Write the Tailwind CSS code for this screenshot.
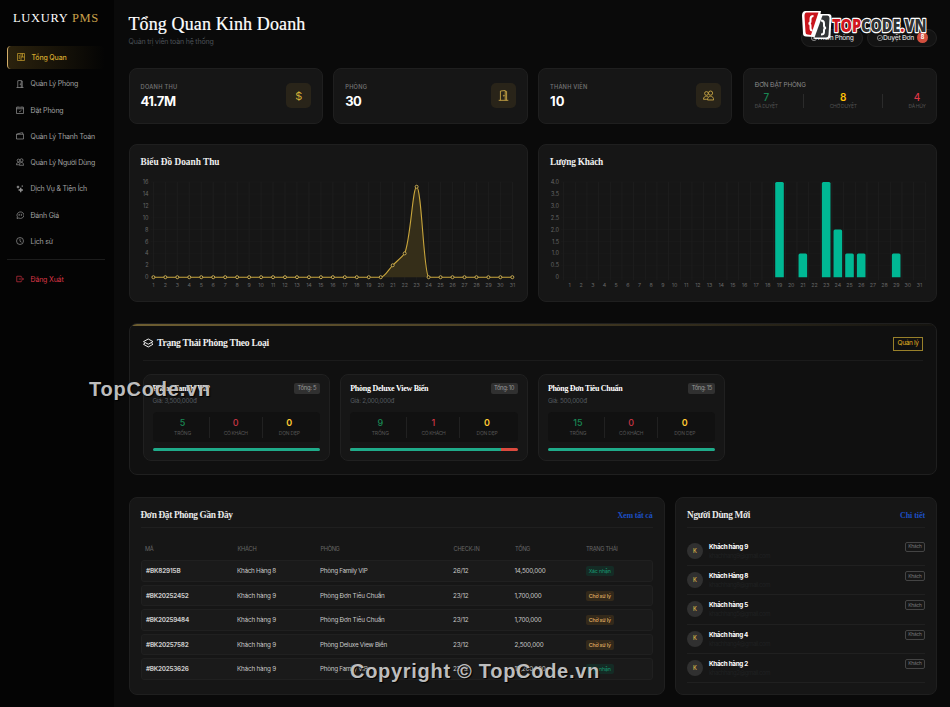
<!DOCTYPE html>
<html lang="vi">
<head>
<meta charset="utf-8">
<title>Luxury PMS</title>
<script src="https://cdn.jsdelivr.net/npm/@tailwindcss/browser@4"></script>
</head>
<body class="w-[950px] h-[707px] overflow-hidden bg-[#0a0a0a] font-[Inter,'Noto_Sans',sans-serif] text-white">
<svg class="hidden">
  <defs>
    <g id="i-grid"><path d="M1 1h14v14H1zM8 1v14M8 8h7M11 1v7M4.500 4v8"/></g>
    <g id="i-door"><path d="M3.500 15V1.500l7-.8V15M10.500 2h2v13M1 15h14"/><circle cx="8.500" cy="8.300" r=".7"/></g>
    <g id="i-cal"><path d="M1 2.500h14V15H1zM1 5.500h14M4 1v1.500M12 1v1.500M6 10l1.500 1.500L11 8.500"/></g>
    <g id="i-wallet"><path d="M1 4.500V14h14V4.500zM1 4.500 11 1.500l2.500 0v3"/></g>
    <g id="i-people"><circle cx="5" cy="5" r="2.700"/><circle cx="11" cy="4.500" r="3"/><path d="M.7 13.500c0-3 2-4.500 4.300-4.500 1 0 2 .3 2.700 1M6.500 14.500h9c0-3.500-2-5.500-4.500-5.500s-4.500 2-4.500 5.500zM.7 13.500h5"/></g>
    <g id="i-stars"><path d="M9.500 5.500l1.200 3.300 3.300 1.200-3.300 1.200-1.200 3.300-1.200-3.300L5 10l3.300-1.200zM4 1.500l.6 1.900 1.900.6-1.900.6L4 6.500l-.6-1.900L1.500 4l1.900-.6zM12.500 1v2.500M11.300 2.200h2.500" fill="currentColor"/></g>
    <g id="i-chat"><path d="M2 15l.8-3.500A7 6.500 0 1 1 5.500 14zM5 6.500h1.800v1.600L5.500 10M9.500 6.500h1.800v1.600L10 10"/></g>
    <g id="i-clock"><circle cx="8" cy="8" r="7"/><path d="M8 3.500V8.500l3 2"/></g>
    <g id="i-exit"><path d="M10.500 5V2.500h-9v11h9V11M5.500 8H15M12 5l3 3-3 3"/></g>
    <g id="i-layers"><path d="M8 1.500l7.300 4L8 9.500l-7.300-4zM3 8L.7 9.500 8 13.700l7.300-4.200L13 8"/></g>
    <g id="i-plus"><circle cx="8" cy="8" r="7"/><path d="M8 4.500v7M4.500 8h7"/></g>
    <g id="i-check"><circle cx="8" cy="8" r="7"/><path d="M4.500 8l2.500 2.500L11.500 6"/></g>
  </defs>
</svg>

<div class="flex w-[950px] h-[707px]">
  <aside class="w-[114px] h-full shrink-0 bg-[#040404] pl-[7px] pr-[9px]">
    <div class="h-[46px] pt-[10px] pl-[6px] font-['Liberation_Serif',serif] text-[12.5px] leading-[16px] whitespace-nowrap"><span data-w="86">LUXURY <span class="text-[#c9a04a]">PMS</span></span></div>
    <nav id="nav" class="flex flex-col gap-[3.8px] text-[7px] leading-[10px] text-[#a0a0a0]"></nav>
    <div class="mt-[6px] h-px bg-[#1c1c1c]"></div>
    <a class="mt-[8px] flex h-[22.500px] items-center pl-[9px] text-[7px] leading-[10px] text-[#dc3545]">
      <svg class="w-[8px] h-[8px] mr-[6.500px]" viewBox="0 0 16 16" fill="none" stroke="currentColor" stroke-width="1.300"><use href="#i-exit"/></svg><span class="pt-[1.500px]" data-w="33">Đăng Xuất</span></a>
  </aside>

  <main class="flex-1 pl-[14.500px] pr-[13px]">
    <header class="flex h-[68px] justify-between">
      <div class="pt-[12px]">
        <h1 class="font-['Liberation_Serif',serif] text-[18px] leading-[24px] whitespace-nowrap [-webkit-text-stroke:0.2px_white]"><span data-w="177">Tổng Quan Kinh Doanh</span></h1>
        <p class="text-[7px] leading-[11px] text-[#4b5157]"><span data-w="85">Quản trị viên toàn hệ thống</span></p>
      </div>
      <div class="flex gap-[4.500px] pt-[28.500px] text-[6.700px] font-medium text-[#d6d6d6]">
        <div class="flex w-[62px] h-[18px] items-center rounded-full border border-[#222] bg-[#131313] pl-[9px]"><svg class="w-[6px] h-[6px]" viewBox="0 0 16 16" fill="none" stroke="currentColor" stroke-width="1.500"><use href="#i-plus"/></svg><span class="pt-[2px]" data-w="37">Thêm Phòng</span></div>
        <div class="flex w-[70px] h-[18px] items-center rounded-full border border-[#222] bg-[#131313] pl-[9px]"><svg class="w-[6px] h-[6px]" viewBox="0 0 16 16" fill="none" stroke="currentColor" stroke-width="1.500"><use href="#i-check"/></svg><span class="pt-[1px]" data-w="31">Duyệt Đơn</span><b class="ml-[3px] flex w-[11px] h-[11px] items-center justify-center rounded-full bg-[#d3503f] text-[5.500px] text-white">8</b></div>
      </div>
    </header>

    <section class="grid grid-cols-4 gap-[10.500px] h-[55.500px]">
      <div class="flex items-center justify-between rounded-[8px] border border-[#1f1f1f] bg-[#161616] pl-[11px] pr-[10.500px]">
        <div><p class="mt-[1px] text-[5.700px] leading-[8px] font-medium text-[#777]"><span data-w="37">DOANH THU</span></p><p class="mt-[1px] text-[13px] leading-[18px] font-bold"><span data-w="35">41.7M</span></p></div>
        <div class="flex w-[25px] h-[25px] items-center justify-center rounded-[5px] bg-[#292419] text-[11px] text-[#d4af37]">$</div>
      </div>
      <div class="flex items-center justify-between rounded-[8px] border border-[#1f1f1f] bg-[#161616] pl-[11px] pr-[10.500px]">
        <div><p class="mt-[1px] text-[5.700px] leading-[8px] font-medium text-[#777]"><span data-w="22">PHÒNG</span></p><p class="mt-[1px] text-[13px] leading-[18px] font-bold"><span data-w="16">30</span></p></div>
        <div class="flex w-[25px] h-[25px] items-center justify-center rounded-[5px] bg-[#292419] text-[#c9a646]"><svg class="w-[11px] h-[11px]" viewBox="0 0 16 16" fill="none" stroke="currentColor" stroke-width="1.300"><use href="#i-door"/></svg></div>
      </div>
      <div class="flex items-center justify-between rounded-[8px] border border-[#1f1f1f] bg-[#161616] pl-[11px] pr-[10.500px]">
        <div><p class="mt-[1px] text-[5.700px] leading-[8px] font-medium text-[#777]"><span data-w="37.500">THÀNH VIÊN</span></p><p class="mt-[1px] text-[13px] leading-[18px] font-bold"><span data-w="14.500">10</span></p></div>
        <div class="flex w-[25px] h-[25px] items-center justify-center rounded-[5px] bg-[#292419] text-[#c9a646]"><svg class="w-[11px] h-[11px]" viewBox="0 0 16 16" fill="none" stroke="currentColor" stroke-width="1.300"><use href="#i-people"/></svg></div>
      </div>
      <div class="rounded-[8px] border border-[#1f1f1f] bg-[#161616] pl-[11px] pr-[10.500px] pt-[11.500px]">
        <p class="text-[6.300px] leading-[9px] text-[#8a8a8a]"><span data-w="51">ĐƠN ĐẶT PHÒNG</span></p>
        <div class="mt-[2px] flex items-center justify-between text-center text-[5px] leading-[7px] text-[#505050]">
          <div><p class="text-[10px] leading-[11px] font-medium text-[#198754]">7</p><p><span class="pt-[0.500px]" data-w="23">ĐÃ DUYỆT</span></p></div>
          <i class="w-px h-[14px] bg-[#2b2b2b]"></i>
          <div><p class="text-[10px] leading-[11px] font-semibold text-[#ffc107]">8</p><p><span class="pt-[0.500px]" data-w="27">CHỜ DUYỆT</span></p></div>
          <i class="w-px h-[14px] bg-[#2b2b2b]"></i>
          <div><p class="text-[10px] leading-[11px] font-medium text-[#dc3545]">4</p><p><span class="pt-[0.500px]" data-w="17">ĐÃ HỦY</span></p></div>
        </div>
      </div>
    </section>

    <section class="mt-[20.500px] grid grid-cols-2 gap-[10.500px] h-[158px]">
      <div class="rounded-[8px] border border-[#1f1f1f] bg-[#161616] pt-[10px]">
        <h2 class="pl-[11px] h-[20px] font-['Liberation_Serif',serif] text-[9.300px] leading-[14px] font-bold text-[#eee]"><span data-w="79">Biểu Đồ Doanh Thu</span></h2>
        <svg id="line" class="block w-[397px] h-[120px]" viewBox="129.500 175 397 120"></svg>
      </div>
      <div class="rounded-[8px] border border-[#1f1f1f] bg-[#161616] pt-[10px]">
        <h2 class="pl-[11px] h-[20px] font-['Liberation_Serif',serif] text-[9.300px] leading-[14px] font-bold text-[#eee]"><span data-w="53">Lượng Khách</span></h2>
        <svg id="bars" class="block w-[397px] h-[120px]" viewBox="539 175 397 120"></svg>
      </div>
    </section>

    <section class="mt-[21px] h-[152px] overflow-hidden rounded-[8px] border border-[#1f1f1f] bg-[#101010]">
      <div class="h-[2px] bg-linear-to-r from-[#6e5e31] via-[#463c23] to-[#151410]"></div>
      <div class="px-[13px]">
        <div class="flex h-[35px] items-center justify-between border-b border-[#1b1b1b]">
          <h2 class="flex items-center gap-[4px] font-['Liberation_Serif',serif] text-[9.600px] font-bold text-[#eee]"><svg class="mt-[1px] w-[10.500px] h-[10.500px]" viewBox="0 0 16 16" fill="none" stroke="currentColor" stroke-width="1.500"><use href="#i-layers"/></svg><span data-w="112">Trạng Thái Phòng Theo Loại</span></h2>
          <a class="mt-[2px] flex w-[28px] h-[12px] box-content items-center justify-center border border-[#98802a] text-[6.500px] text-[#e0b020]"><span data-w="21">Quản lý</span></a>
        </div>
        <div id="rooms" class="mt-[12.500px] grid grid-cols-4 gap-[10.300px]"></div>
      </div>
    </section>

    <section class="mt-[22px] flex gap-[10.500px] h-[198px]">
      <div class="w-[536px] shrink-0 rounded-[8px] border border-[#1f1f1f] bg-[#161616] px-[11px]">
        <div class="flex h-[30px] items-center justify-between border-b border-[#1f1f1f] pt-[6px] font-['Liberation_Serif',serif] text-[9.300px] font-bold text-[#e8e8e8]"><h2><span data-w="92">Đơn Đặt Phòng Gần Đây</span></h2><a class="text-[8px] text-[#1c4fc4]"><span data-w="35">Xem tất cả</span></a></div>
        <div class="grid h-[33px] grid-cols-[92.500px_83px_133px_61.500px_71px_1fr] items-center pl-[4.500px] pt-[9px] text-[5.700px] text-[#666]">
          <span><span data-w="8.500">MÃ</span></span><span><span data-w="19">KHÁCH</span></span><span><span data-w="19">PHÒNG</span></span><span><span data-w="26">CHECK-IN</span></span><span><span data-w="15">TỔNG</span></span><span><span data-w="31.500">TRẠNG THÁI</span></span>
        </div>
        <div id="orders" class="-mt-[1px] flex flex-col gap-[3px]"></div>
      </div>
      <div class="flex-1 rounded-[8px] border border-[#1f1f1f] bg-[#161616] px-[11px]">
        <div class="flex h-[30px] items-center justify-between border-b border-[#1f1f1f] pt-[6px] font-['Liberation_Serif',serif] text-[9.300px] font-bold text-[#e8e8e8]"><h2><span data-w="63">Người Dùng Mới</span></h2><a class="text-[8px] text-[#1c4fc4]"><span data-w="25">Chi tiết</span></a></div>
        <div id="users" class="pt-[9px]"></div>
      </div>
    </section>
  </main>
</div>

<svg class="absolute left-[798px] top-[6px] w-[136px] h-[38px]" viewBox="798 6 136 38">
  <path d="M806 11h15l-.5 3H828.500q3 0 3 3l-1 19q0 3-3 3h-13l-.5-2-8-.5q-3 0-3-3l-1-18q0-4 3-4.500z" fill="#fff"/>
  <path d="M806.500 12.500h12l-7.500 22.500-3.500-.5q-2 0-2-2.500l-1-16q0-3.500 2-3.500z" fill="#c9141c"/>
  <path d="M822.500 15.500h5q2 0 2 2.500l-1 17q-.3 2.500-2.500 2.500h-11.500z" fill="#333638"/>
  <path d="M813.500 16q-3 0-3 3v2.300q0 2-2 2.200 2 .2 2 2.200V28q0 2.500 2 2.500M821 20.500q3 0 3 3v2.300q0 2 2 2.200-2 .2-2 2.200V32q0 2.500-3 2.500" fill="none" stroke="#fff" stroke-width="2"/>
  <text x="832" y="31.500" font-family="Open Sans, sans-serif" font-weight="800" font-size="18" textLength="94.500" lengthAdjust="spacingAndGlyphs" paint-order="stroke" stroke="#fff" stroke-width="2.400" stroke-linejoin="round"><tspan fill="#d0161e">TOP</tspan><tspan fill="#303234">CODE</tspan><tspan fill="#d0161e">.</tspan><tspan fill="#303234">VN</tspan></text>
</svg>
<div class="absolute left-[89px] top-[377px] whitespace-nowrap font-['Liberation_Sans',sans-serif] text-[20px] leading-[24px] font-bold text-[#bdbdbd] [text-shadow:1px_1px_1px_#000]"><span data-w="122">TopCode.vn</span></div>
<div class="absolute left-[350px] top-[659px] whitespace-nowrap font-['Liberation_Sans',sans-serif] text-[20px] leading-[24px] font-bold text-[#bdbdbd] [text-shadow:1px_1px_1px_#000]"><span data-w="250">Copyright © TopCode.vn</span></div>

<script>
const $ = id => document.getElementById(id);

$('nav').innerHTML = [['grid','Tổng Quan',35],['door','Quản Lý Phòng',47.5],['cal','Đặt Phòng',33],['wallet','Quản Lý Thanh Toán',64.5],['people','Quản Lý Người Dùng',64.5],['stars','Dịch Vụ & Tiện Ích',56.5],['chat','Đánh Giá',28.5],['clock','Lịch sử',22.5]]
  .map(([icon, label, w], i) => `<a class="${i ? 'flex h-[22.5px] items-center pl-[9px]' : 'flex h-[22.5px] items-center rounded-[4px] border-l border-[#d4af6a] bg-linear-to-r from-[#2b220d] to-transparent pl-[9px] font-medium text-[#d4a92f]'}"><svg class="w-[8px] h-[8px] mr-[6.5px]" viewBox="0 0 16 16" fill="none" stroke="currentColor" stroke-width="1.3"><use href="#i-${icon}"/></svg><span class="pt-[1.5px]" data-w="${w}">${label}</span></a>`).join('');

$('rooms').innerHTML = [['Phòng Family VIP',57,'3,500,000đ',44,5,5,0],['Phòng Deluxe View Biển',78,'2,000,000đ',44,10,9,1],['Phòng Đơn Tiêu Chuẩn',74.5,'500,000đ',39,15,15,0]]
  .map(([name, nw, price, pw, total, free, busy]) => `<div class="h-[87px] rounded-[8px] border border-[#202020] bg-[#161616] px-[9px] pt-[8.5px]">
    <div class="flex h-[11px] items-center justify-between"><h3 class="font-['Liberation_Serif',serif] text-[8px] font-bold"><span class="pt-[1px]" data-w="${nw}">${name}</span></h3><span class="flex h-[10.5px] items-center rounded-[2px] bg-[#303030] px-[3.5px] text-[5.8px] text-[#999]"><span data-w="${total === 5 ? 19 : 20}">Tổng: ${total}</span></span></div>
    <p class="mt-[2.5px] text-[6.3px] leading-[9px] text-[#555b60]"><span data-w="${pw}">Giá: ${price}</span></p>
    <div class="mt-[6.5px] grid h-[30px] grid-cols-3 items-center divide-x divide-[#212121] rounded-[4px] bg-[#111] px-[4px] text-center text-[5px] text-[#555]">
      <div class="h-[21px]"><p class="text-[9px] leading-[11px] font-medium text-[#198754]">${free}</p><p class="leading-[10px]"><span data-w="17">TRỐNG</span></p></div>
      <div class="h-[21px]"><p class="text-[9px] leading-[11px] font-medium text-[#c93545]">${busy}</p><p class="leading-[10px]"><span data-w="24">CÓ KHÁCH</span></p></div>
      <div class="h-[21px]"><p class="text-[9px] leading-[11px] font-semibold text-[#ffc933]">0</p><p class="leading-[10px]"><span data-w="21">DỌN DẸP</span></p></div>
    </div>
    <div class="mt-[6px] flex h-[3px] overflow-hidden rounded-full bg-[#db4a3e]"><i class="bg-[#1fab8a]" style="width:${free / total * 100}%"></i></div></div>`).join('');

$('orders').innerHTML = [['#BK82915B',34.5,'Khách Hàng 8','Phòng Family VIP',47.5,'26/12','14,500,000',31,1],['#BK20252452',42.5,'Khách hàng 9','Phòng Đơn Tiêu Chuẩn',64.5,'23/12','1,700,000',27,0],['#BK20259484',43,'Khách hàng 9','Phòng Đơn Tiêu Chuẩn',64.5,'23/12','1,700,000',27,0],['#BK20257582',42.5,'Khách hàng 9','Phòng Deluxe View Biển',67,'23/12','2,500,000',29,0],['#BK20253626',42.5,'Khách hàng 9','Phòng Family VIP',47.5,'23/12','15,200,000',31,1]]
  .map(r => `<div class="grid h-[21.5px] grid-cols-[91px_83px_133px_61.5px_71px_1fr] items-center rounded-[3px] border border-[#202020] bg-[#1a1a1a] pl-[4.5px] text-[6.3px] leading-[10px] text-[#c8c8c8]"><b class="pt-[1px]"><span data-w="${r[1]}">${r[0]}</span></b><span class="pt-[1px]"><span data-w="39">${r[2]}</span></span><span class="pt-[1px]"><span data-w="${r[4]}">${r[3]}</span></span><span class="pt-[1px]"><span data-w="15.5">${r[5]}</span></span><span class="pt-[1px]"><span data-w="${r[7]}">${r[6]}</span></span><span class="${r[8] ? 'mt-[1px] flex w-[28.5px] h-[10px] items-center justify-center rounded-[2px] bg-[#142b25] text-[5.3px] text-[#189873]' : 'mt-[1px] flex w-[28.5px] h-[10px] items-center justify-center rounded-[2px] bg-[#33291a] text-[5.3px] font-medium text-[#e0b062]'}"><span data-w="22">${r[8] ? 'Xác nhận' : 'Chờ xử lý'}</span></span></div>`).join('');

$('users').innerHTML = [['hàng',9],['Hàng',8],['hàng',5],['hàng',4],['hàng',2]]
  .map(([h, n]) => `<div class="flex h-[29.2px] border-b border-[#202020] pt-[5px]">
    <div class="mt-[1px] flex w-[16px] h-[16px] items-center justify-center rounded-full bg-[#303030] text-[5.5px] font-semibold text-[#c9a646]">K</div>
    <div class="ml-[6px] pt-[1px]"><p class="text-[6.3px] leading-[8px] font-bold"><span data-w="39">Khách ${h} ${n}</span></p><p class="mt-[1px] text-[6px] leading-[8px] text-[#202122]"><span data-w="61">khachhang${n}@gmail.com</span></p></div>
    <span class="ml-auto flex w-[20px] h-[10px] items-center justify-center rounded-[2px] border border-[#444] text-[4.8px] text-[#777]"><span data-w="13.5">Khách</span></span></div>`).join('');

const text = (x, y, s, anchor, size) => `<text x="${x}" y="${y}" font-size="${size}" text-anchor="${anchor}" fill="#666">${s}</text>`;
const seg = (x1, y1, x2, y2, c = '#1f1f1f') => `<path d="M${x1} ${y1}L${x2} ${y2}" stroke="${c}" stroke-width="0.8"/>`;
const top0 = 182, base = 277.2, H = base - top0;

let s = '';
const px = i => 152.9 + (i - 1) * 11.965;
for (let v = 0; v <= 16; v += 2) { const y = base - v / 16 * H; s += seg(150, y, 511.9, y, '#1a1a1a') + text(148, y + 2, v, 'end', 5.5); }
for (let i = 1; i <= 31; i++) s += seg(px(i), top0, px(i), base + 3) + text(px(i), 287.2, i, 'middle', 5.3);
const vals = { 21: 2, 22: 4, 23: 15.2 };
const py = i => base - (vals[i] || 0) / 16 * H;
const curve = `M${px(1)} ${base}H${px(20)}C${px(20) + 4} ${base} ${px(21) - 4} ${py(21) + 4} ${px(21)} ${py(21)}C${px(21) + 4} ${py(21) - 4} ${px(22) - 2} ${py(22) + 3} ${px(22)} ${py(22)}C${px(22) + 6} ${py(22) - 14} ${px(23) - 4} ${py(23)} ${px(23)} ${py(23)}C${px(23) + 5} ${py(23)} ${px(24) - 5} ${base - 4} ${px(24)} ${base}`;
s += `<path d="${curve}Z" fill="#352e19"/><path d="${curve}H${px(31)}" fill="none" stroke="#c9a63c" stroke-width="1.1"/>`;
for (let i = 1; i <= 31; i++) s += `<circle cx="${px(i)}" cy="${py(i)}" r="1.5" fill="#15130d" stroke="#d4b65a" stroke-width="0.9"/>`;
$('line').innerHTML = s;

s = '';
const bx = i => 569.5 + (i - 1) * 11.667;
for (let k = 0; k <= 8; k++) { const y = base - k / 8 * H; s += seg(561, y, 925.5, y, '#1a1a1a') + text(559, y + 2, k ? (k / 2).toFixed(1) : '0', 'end', 5.5); }
for (let i = 1; i <= 32; i++) s += seg(bx(i) - 5.9, top0, bx(i) - 5.9, base + 3);
for (let i = 1; i <= 31; i++) s += text(bx(i), 287.2, i, 'middle', 5.3);
for (const [d, v] of [[19,4],[21,1],[23,4],[24,2],[25,1],[26,1],[29,1]]) { const h = v / 4 * H, x = bx(d) - 4.3; s += `<path d="M${x} ${base}v${-h + 1.5}q0 -1.5 1.5 -1.5h5.6q1.5 0 1.5 1.5v${h - 1.5}z" fill="#00b894"/>`; }
$('bars').innerHTML = s;

function fit() {
  document.querySelectorAll('[data-w]').forEach(el => {
    el.style.whiteSpace = 'nowrap';
    el.style.display = 'inline-block';
    el.style.letterSpacing = '0px';
    const n = [...el.textContent.normalize('NFC')].length;
    const gap = (el.dataset.w - el.getBoundingClientRect().width) / n;
    el.style.letterSpacing = Math.max(-1, Math.min(2, gap)) + 'px';
  });
}
fit();
addEventListener('load', fit);
document.fonts.ready.then(fit);
new ResizeObserver(fit).observe(document.body);
new MutationObserver(fit).observe(document.head, { childList: true, subtree: true });
[30, 100, 250].forEach(t => setTimeout(fit, t));
</script>
</body>
</html>
